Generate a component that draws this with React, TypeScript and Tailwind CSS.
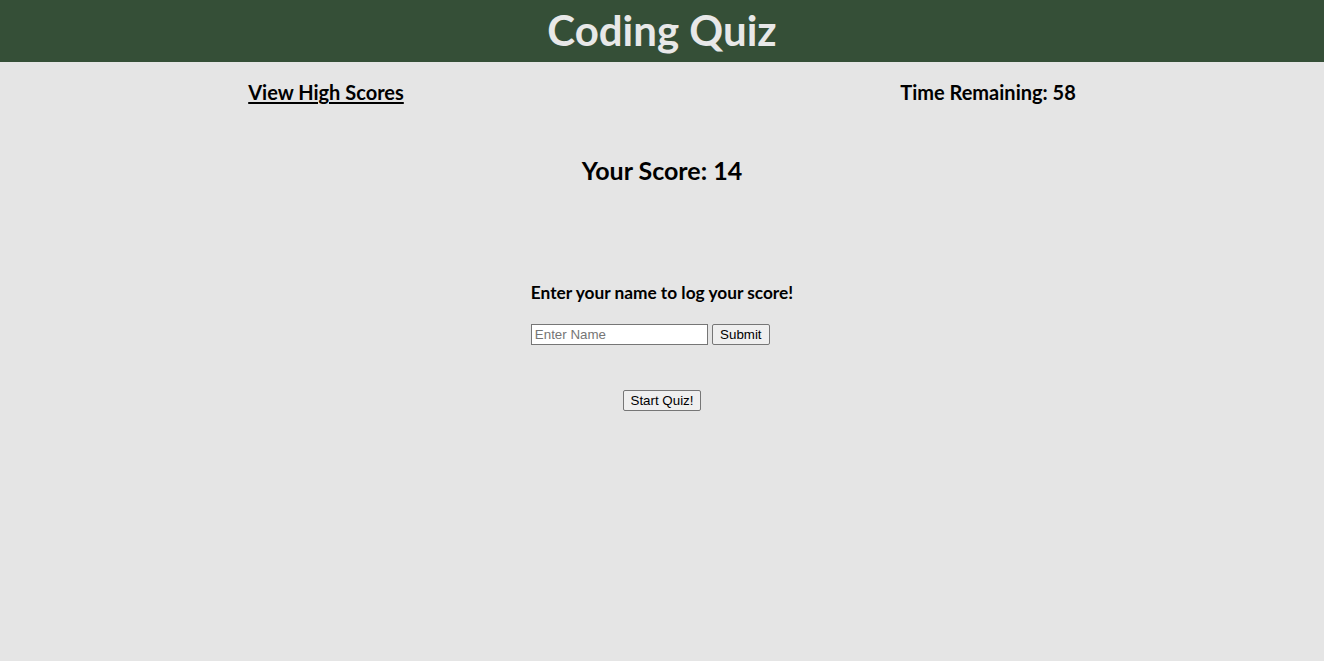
export default function App() {
  return (
    <div className="min-h-[661px] bg-[#e5e5e5] font-['Lato','Open_Sans',sans-serif] text-black">
      {/* Title bar */}
      <header className="h-[62px] bg-[#354f37] flex items-center justify-center pb-[3px]">
        <h1 className="text-[42px] font-bold text-[#e8e8e8] leading-none">Coding Quiz</h1>
      </header>

      {/* Nav row */}
      <div className="flex justify-around items-center h-[60px]">
        <a href="#" className="text-[20px] font-bold underline underline-offset-2">
          View High Scores
        </a>
        <span className="text-[20px] font-bold">Time Remaining: 58</span>
      </div>

      {/* Score */}
      <h2 className="text-center text-[25px] font-bold mt-[29px] h-[100px] pt-[1px]">Your Score: 14</h2>

      {/* Log score */}
      <div className="flex flex-col items-center mt-[29px]">
        <div>
          <p className="text-[17.3px] font-bold mb-[18px]">Enter your name to log your score!</p>
          <div className="flex gap-[4px] items-center">
            <input
              type="text"
              placeholder="Enter Name"
              className="w-[177px] h-[21px] border border-[#767676] bg-white px-[3px] text-[13.33px] font-['Liberation_Sans',Arial,sans-serif] placeholder:text-[#757575]"
            />
            <button className="h-[21px] px-[7px] w-[58px] border border-[#767676] rounded-[2px] bg-[#efefef] text-[13.33px] font-['Liberation_Sans',Arial,sans-serif]">
              Submit
            </button>
          </div>
        </div>
        <button className="mt-[45px] h-[21px] px-[7px] border border-[#767676] rounded-[2px] bg-[#efefef] text-[13.33px] font-['Liberation_Sans',Arial,sans-serif]">
          Start Quiz!
        </button>
      </div>
    </div>
  );
}
